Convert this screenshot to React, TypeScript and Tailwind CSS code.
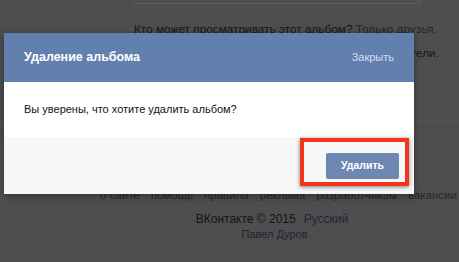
import React from "react";

const FooterLinks = ["о сайте", "помощь", "правила", "реклама", "разработчикам", "вакансии"];

const DeleteAlbumDialog = () => {
  return (
    <div className="relative h-[262px] w-[459px] overflow-hidden bg-[#4e4e4e] font-['Liberation_Sans',sans-serif]">
      {/* dimmed page behind the dialog */}
      <div className="flex flex-col">
        <div className="ml-[133px] h-[4px] w-[287px] border-x border-b border-[#5c5c5c]" />
        <div className="ml-[134px] mt-[17px] text-[11.8px] leading-[16px] text-[#161616] whitespace-nowrap">
          Кто может просматривать этот альбом? <span className="text-[#1c2736]">Только друзья.</span>
        </div>
        <div className="mt-[8px] flex w-[439px] justify-end text-[11.8px] leading-[16px] text-[#161616] whitespace-nowrap">
          Кто может комментировать фотографии? Все пользователи.
        </div>
        <div className="mt-[60px] h-px w-full bg-[#575757]" />
        <div className="ml-[100px] mt-[65px] flex gap-[11px] text-[11.5px] leading-[16px] text-[#1e2633] whitespace-nowrap">
          {FooterLinks.map((l) => (
            <span key={l}>{l}</span>
          ))}
        </div>
        <div className="mt-[8px] flex justify-center gap-[8px] pl-[85px] text-[12px] leading-[16px] whitespace-nowrap">
          <span className="text-[#141414]">ВКонтакте © 2015</span>
          <span className="text-[#1c2736]">Русский</span>
        </div>
        <div className="flex justify-center pl-[90px] text-[11px] leading-[14px] text-[#1c2736]">Павел Дуров</div>
      </div>

      {/* dialog */}
      <div className="absolute left-[4px] top-[33px] w-[410px] shadow-[0_2px_8px_rgba(0,0,0,0.35)]">
        <div className="flex h-[49px] items-center justify-between bg-[#6180ad] px-[20px]">
          <span className="text-[12.5px] font-bold text-white">Удаление альбома</span>
          <span className="text-[11px] text-[#d5def0]">Закрыть</span>
        </div>
        <div className="flex h-[55px] items-center bg-white px-[20px] text-[11px] text-[#111]">
          Вы уверены, что хотите удалить альбом?
        </div>
        <div className="flex h-[57px] items-end justify-end bg-[#f7f7f7] pb-[15px] pr-[15px]">
          <button className="h-[26px] w-[73px] rounded-[2px] bg-[#6e87b2] text-[10.5px] font-bold text-white">
            Удалить
          </button>
        </div>
      </div>

      {/* annotation frame */}
      <div className="absolute left-[300px] top-[138px] h-[48px] w-[109px] border-[4px] border-[#f2361c] shadow-[0_1px_4px_rgba(0,0,0,0.5)]" />
    </div>
  );
};

export default DeleteAlbumDialog;
